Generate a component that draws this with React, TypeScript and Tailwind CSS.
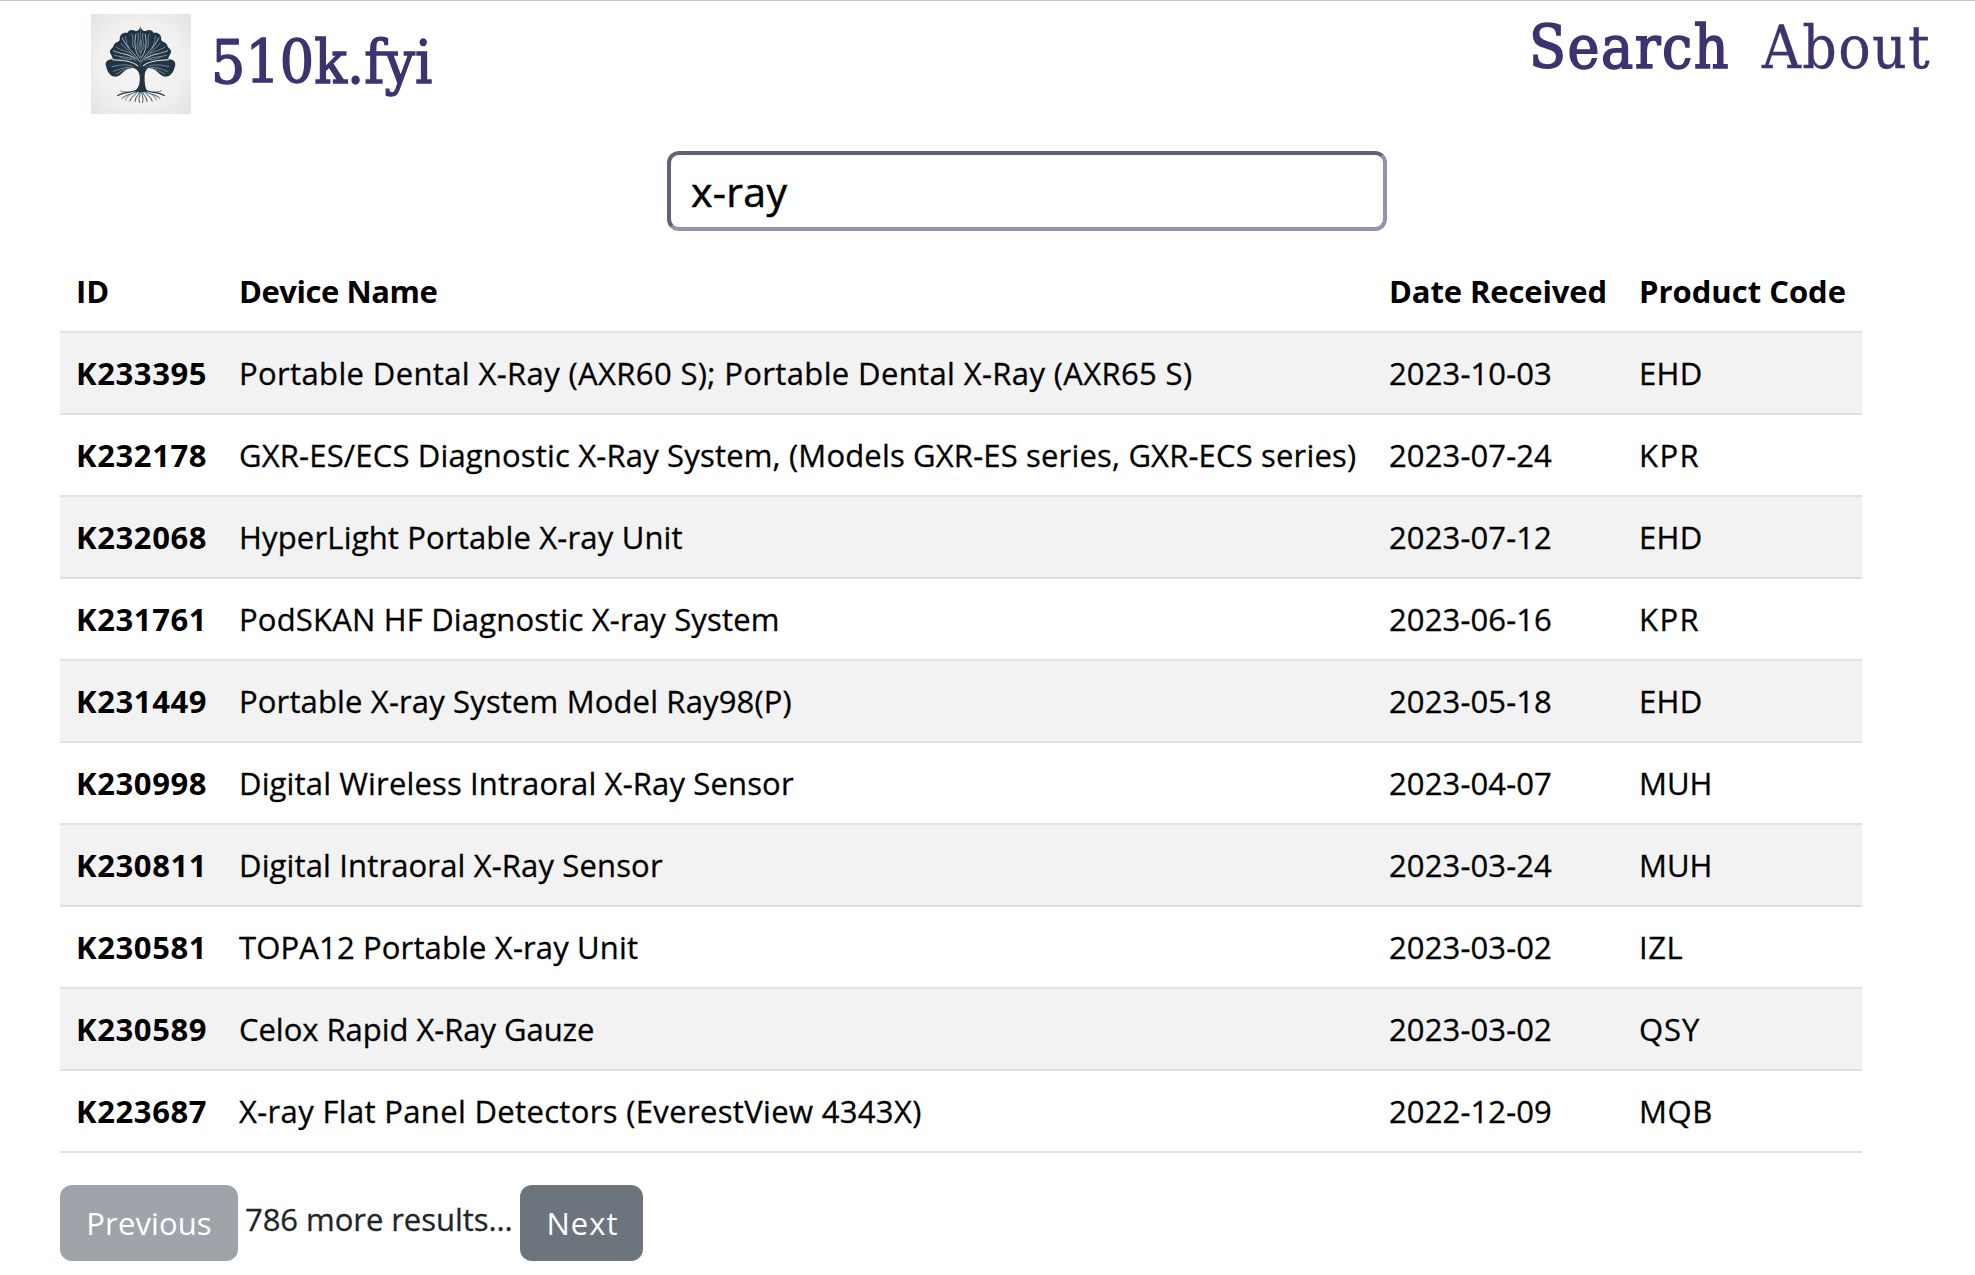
type Device = { id: string; name: string; date: string; code: string; nameTrack: string; codeTrack: string };

const devices: Device[] = [
  { id: "K233395", name: "Portable Dental X-Ray (AXR60 S); Portable Dental X-Ray (AXR65 S)", date: "2023-10-03", code: "EHD", nameTrack: "tracking-[0.37px]", codeTrack: "tracking-[0.3px]" },
  { id: "K232178", name: "GXR-ES/ECS Diagnostic X-Ray System, (Models GXR-ES series, GXR-ECS series)", date: "2023-07-24", code: "KPR", nameTrack: "tracking-[0.17px]", codeTrack: "tracking-[1.4px]" },
  { id: "K232068", name: "HyperLight Portable X-ray Unit", date: "2023-07-12", code: "EHD", nameTrack: "tracking-[0.17px]", codeTrack: "tracking-[0.3px]" },
  { id: "K231761", name: "PodSKAN HF Diagnostic X-ray System", date: "2023-06-16", code: "KPR", nameTrack: "tracking-[0.18px]", codeTrack: "tracking-[1.4px]" },
  { id: "K231449", name: "Portable X-ray System Model Ray98(P)", date: "2023-05-18", code: "EHD", nameTrack: "tracking-[0.15px]", codeTrack: "tracking-[0.3px]" },
  { id: "K230998", name: "Digital Wireless Intraoral X-Ray Sensor", date: "2023-04-07", code: "MUH", nameTrack: "tracking-[0.15px]", codeTrack: "tracking-[0px]" },
  { id: "K230811", name: "Digital Intraoral X-Ray Sensor", date: "2023-03-24", code: "MUH", nameTrack: "tracking-[0.14px]", codeTrack: "tracking-[0px]" },
  { id: "K230581", name: "TOPA12 Portable X-ray Unit", date: "2023-03-02", code: "IZL", nameTrack: "tracking-[0.15px]", codeTrack: "tracking-[0.6px]" },
  { id: "K230589", name: "Celox Rapid X-Ray Gauze", date: "2023-03-02", code: "QSY", nameTrack: "tracking-[-0.04px]", codeTrack: "tracking-[0.9px]" },
  { id: "K223687", name: "X-ray Flat Panel Detectors (EverestView 4343X)", date: "2022-12-09", code: "MQB", nameTrack: "tracking-[0.34px]", codeTrack: "tracking-[0.6px]" },
];

/** One side of the tree's crown: leaf lobes with light veins running out from the trunk. */
function HalfCrown() {
  return (
    <g>
      <path
        fill="#1f3445"
        d="M49.5 12.8 C48.4 15.6 47 17.4 44.6 17 C41 15.2 37.6 15.8 36.6 18.8 C32 18 28.2 20.6 28.8 25.6 C28.8 27.4 27 27.6 25 28.8 C22.2 30.2 23.2 32.2 21.2 34 C18.4 36 18.2 38.4 20 40.4 C20.6 42.4 22 43.6 21.8 45.2 C16.4 44.6 13.6 48.6 15 52 C16 57 18.8 62 23.4 62.6 C28.4 63.2 31 58.6 34.6 56.2 C38 54 42.5 53.6 46.6 56.4 L49.5 58 Z"
      />
      <g fill="none" stroke="#cfd3d4" strokeWidth="0.5" strokeLinecap="round">
        <path d="M47.2 52 C40 46 30 46.6 21.6 45.6" strokeWidth="1.1" />
        <path d="M44 53.2 C37 49.6 30 50.8 21 52.6" />
        <path d="M41.4 54 C35 52 29 55 22.6 57.4" />
        <path d="M38 54.6 C33 54.6 30 58 25.4 60" />
        <path d="M47.4 49 C42 42 32 44 23.4 41.2" />
        <path d="M46 46.2 C40 39.4 32 41 22.4 36.8" strokeWidth="0.8" />
        <path d="M43.6 42.8 C38 36.4 31 37.6 25 32.8" />
        <path d="M40 39.2 C35.6 33.6 33 34 30 29.4" />
        <path d="M48.4 47.6 C44 38 36 35.6 31.4 24" strokeWidth="0.8" />
        <path d="M38.2 33.6 C34.6 29 35.6 26 34.4 22.4" />
        <path d="M42.4 33.6 C40 29 43.6 25 40.6 20" />
        <path d="M48.6 43.6 C43 36 43.4 29 44.8 20.4" strokeWidth="0.8" />
        <path d="M46.4 35 C44.8 30 48.4 27 47.2 19.4" />
        <path d="M49 39 C46.4 34 49 31 49.2 26" />
        <path d="M45.4 44.4 C41 44 36 39.6 33 40" />
        <path d="M40.6 45.6 C36 45.4 33 45 29 42.8" />
      </g>
    </g>
  );
}

function HalfRoots() {
  return (
    <g fill="none" stroke="#1f3445" strokeLinecap="round">
      <path d="M46 76 C41 79.4 35 76.6 26.6 81.4" strokeWidth="1.1" />
      <path d="M46 77 C40 81.4 36 79.8 31 84.4" strokeWidth="0.8" />
      <path d="M46.6 77.4 C44 82.4 40 82 38.8 87" strokeWidth="0.9" />
      <path d="M48.6 77.6 C47.4 82 43.6 83.6 44.2 87.4" strokeWidth="0.9" />
      <path d="M49.2 77.6 C49.4 82 46.8 84 48.6 88.6" strokeWidth="0.8" />
      <path d="M38 78.4 C35 77.4 32 78.4 29.6 77" strokeWidth="0.6" />
      <path d="M39 80.6 C36 83 35.6 83.6 34.6 86" strokeWidth="0.6" />
    </g>
  );
}

function TreeLogo() {
  return (
    <svg viewBox="0 0 100 100" className="size-[100px] shrink-0" aria-label="510k.fyi logo">
      <defs>
        <radialGradient id="paper" cx="50%" cy="50%" r="70%">
          <stop offset="0" stopColor="#f6f5f4" />
          <stop offset="0.6" stopColor="#f1f0ee" />
          <stop offset="1" stopColor="#e5e3e1" />
        </radialGradient>
      </defs>
      <rect width="100" height="100" fill="url(#paper)" />
      <HalfCrown />
      <g transform="translate(99 0) scale(-1 1)">
        <HalfCrown />
      </g>
      <path fill="#f4f3f1" d="M40 54.2 C44.6 53.4 47.6 57 48.2 61 L48.4 68 L42 68 Z M59 54.2 C54.6 53.4 53.8 57 53.2 61 L53.2 68 L59 68 Z" />
      <path
        fill="#1f3445"
        d="M39.6 52.6 C44.4 53 48.8 57.4 48.8 63.4 C48.8 69.4 48 73.4 43.6 77.4 C48 78.2 51 78.6 56.4 77.6 C53.8 73 53.6 68.6 53.6 63.4 C53.8 57.4 55.4 54 59.6 52.6 C55.6 52 52.8 53.6 51.6 56 C51.4 51 53 48 56.4 44 C52.6 46.4 50.4 49 49.8 52.4 C49 48.4 46.6 45.8 43.4 44 C46.6 48 47.8 51.4 47.8 55.4 C46 53 43.4 52 39.6 52.6 Z"
      />
      <HalfRoots />
      <g transform="translate(100 0) scale(-1 1)">
        <HalfRoots />
      </g>
    </svg>
  );
}

const slab = "font-['DejaVu_Serif_Condensed','DejaVu_Serif',serif] text-[60px] leading-[72px] text-[#3a3470]";

export default function App() {
  return (
    <div className="min-h-[1275px] border-t border-[#c4c4c4] bg-white font-['Open_Sans',sans-serif] text-[31px] leading-[48px] text-black">
      <header className="flex h-[150px] items-start justify-between pt-[13px] pr-[44px] pl-[91px]">
        <a className="flex items-start" href="#">
          <TreeLogo />
          <span className={`${slab} mt-[12px] ml-[20px] tracking-[0.1px] [-webkit-text-stroke:1.4px_#3a3470]`}>510k.fyi</span>
        </a>
        <nav className="-mt-[3px] flex gap-[32px]">
          <a className={`${slab} tracking-[1.5px] [-webkit-text-stroke:1.6px_#3a3470]`} href="#">Search</a>
          <a className={`${slab} tracking-[1.3px] [-webkit-text-stroke:0.3px_#3a3470]`} href="#">About</a>
        </nav>
      </header>

      <div className="ml-[667px] flex h-[80px] w-[720px] items-center rounded-[12px] border-4 border-t-[#656077] border-r-[#9690af] border-b-[#9690af] border-l-[#656077] pl-5">
        <span className="text-[41px] tracking-[0.3px] [-webkit-text-stroke:0.5px_black]">x-ray</span>
      </div>

      <table className="mt-5 ml-[60px] w-[1802px] table-fixed border-separate border-spacing-0 text-left">
        <colgroup>
          <col className="w-[163px]" />
          <col className="w-[1150px]" />
          <col className="w-[250px]" />
          <col className="w-[239px]" />
        </colgroup>
        <thead>
          <tr className="whitespace-nowrap *:border-b-2 *:border-[#dee2e6] *:p-4 *:font-bold">
            <th>ID</th>
            <th className="tracking-[-0.45px]">Device Name</th>
            <th className="tracking-[-0.12px]">Date Received</th>
            <th>Product Code</th>
          </tr>
        </thead>
        <tbody>
          {devices.map((d) => (
            <tr key={d.id} className="whitespace-nowrap odd:bg-[#f2f2f2] *:border-b-2 *:border-[#dee2e6] *:p-4">
              <th className="font-bold tracking-[0.6px]">{d.id}</th>
              <td className={`${d.nameTrack} [-webkit-text-stroke:0.3px_black]`}>{d.name}</td>
              <td className="tracking-[0.12px] [-webkit-text-stroke:0.3px_black]">{d.date}</td>
              <td className={`${d.codeTrack} [-webkit-text-stroke:0.3px_black]`}>{d.code}</td>
            </tr>
          ))}
        </tbody>
      </table>

      <div className="mt-8 ml-[60px] flex h-[76px]">
        <button className="w-[178px] rounded-[12px] bg-[#6c757d] pb-px tracking-[0.1px] text-white opacity-65" disabled>Previous</button>
        <span className="w-[282px] pt-[10px] pl-[7px] tracking-[-0.05px] text-[#212529] [-webkit-text-stroke:0.3px_#212529]">786 more results...</span>
        <button className="w-[123px] rounded-[12px] bg-[#6c757d] pb-px pl-[2px] tracking-[1px] text-white">Next</button>
      </div>
    </div>
  );
}
